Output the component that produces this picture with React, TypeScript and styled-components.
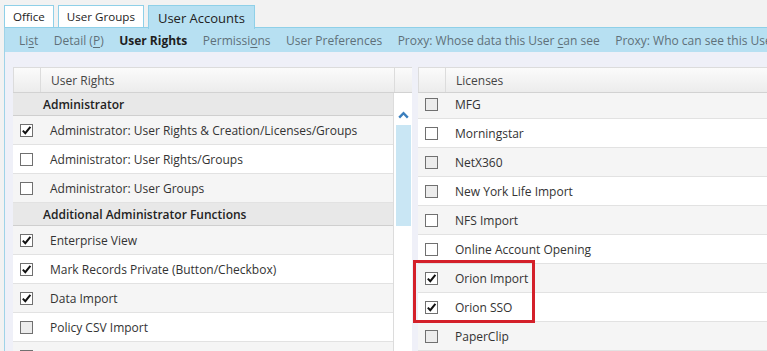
import React from 'react';
import styled, { createGlobalStyle } from 'styled-components';

const GlobalStyle = createGlobalStyle`
  html, body {
    margin: 0;
    padding: 0;
    height: 351px;
    overflow: hidden;
    background: #f2f2f2;
    font-family: 'Open Sans', 'Noto Sans', sans-serif;
    color: #333;
  }
`;

const Page = styled.div`
  width: 767px;
  height: 351px;
  overflow: hidden;
  display: flex;
  flex-direction: column;
`;

const TabStrip = styled.div`
  display: flex;
  gap: 4px;
  padding: 5px 0 0 4px;
  height: 22px;
  flex-shrink: 0;
`;

const Tab = styled.div<{ active?: boolean }>`
  display: flex;
  align-items: center;
  padding: 0 ${p => (p.active ? '9px' : '8px')};
  height: ${p => (p.active ? '23px' : '21px')};
  border: 1px solid #8fd0e8;
  border-bottom: none;
  background: ${p => (p.active ? '#b7e0f2' : '#ffffff')};
  font-size: ${p => (p.active ? '13px' : '11.6px')};
  color: #222;
  white-space: nowrap;
  z-index: 1;
`;

const Panel = styled.div`
  flex: 1;
  margin-left: 4px;
  border-left: 1px solid #9fd3e8;
  border-top: 1px solid #8fd0e8;
  background: #eff0f8;
  display: flex;
  flex-direction: column;
  min-height: 0;
`;

const SubNav = styled.nav`
  display: flex;
  align-items: center;
  gap: 15.5px;
  height: 24px;
  flex-shrink: 0;
  padding-left: 14px;
  background: #b7e0f2;
  white-space: nowrap;
  overflow: hidden;
`;

const NavItem = styled.span<{ active?: boolean }>`
  font-size: 12px;
  color: ${p => (p.active ? '#1e1e1e' : '#5f7079')};
  font-weight: ${p => (p.active ? 700 : 400)};
  u {
    text-decoration: underline;
    text-underline-offset: 2px;
  }
`;

const Content = styled.div`
  display: flex;
  gap: 6px;
  padding: 15px 0 0 8px;
  min-height: 0;
  flex: 1;
  overflow: hidden;
`;

const Grid = styled.div<{ width?: number }>`
  display: flex;
  flex-direction: column;
  flex: ${p => (p.width ? `0 0 ${p.width}px` : '1')};
  position: relative;
  background: #fff;
  min-height: 0;
`;

const HeaderRow = styled.div`
  display: flex;
  height: 24px;
  flex-shrink: 0;
  border-top: 1px solid #dcdcdc;
  border-bottom: 1px solid #d2d2d2;
  background: linear-gradient(#fbfbfb, #ececec);
`;

const HeaderCell = styled.div<{ w?: number }>`
  display: flex;
  align-items: center;
  padding-left: ${p => (p.w ? '0' : '10px')};
  flex: ${p => (p.w ? `0 0 ${p.w}px` : '1')};
  border-left: 1px solid #dcdcdc;
  font-size: 12px;
  color: #444;
`;

const Body = styled.div`
  display: flex;
  flex: 1;
  min-height: 0;
  overflow: hidden;
`;

const Rows = styled.div<{ scrolled?: number }>`
  flex: 1;
  display: flex;
  flex-direction: column;
  margin-top: ${p => (p.scrolled ? `-${p.scrolled}px` : '0')};
`;

const GroupRow = styled.div`
  display: flex;
  align-items: center;
  height: 22px;
  flex-shrink: 0;
  padding-left: 30px;
  background: #e8e8e8;
  border-bottom: 1px solid #cfcfcf;
  font-size: 12px;
  font-weight: 600;
  color: #222;
`;

const Row = styled.div<{ shaded?: boolean }>`
  display: flex;
  align-items: center;
  height: 28px;
  flex: 0 0 28px;
  background: ${p => (p.shaded ? '#f5f5f5' : '#ffffff')};
  border-bottom: 1px solid #e2e2e2;
  font-size: 12px;
  color: #333;
`;

const CheckCell = styled.div`
  flex: 0 0 26px;
  display: flex;
  align-items: center;
  justify-content: center;
`;

const Box = styled.span<{ muted?: boolean }>`
  width: 11px;
  height: 11px;
  border: 1px solid #707070;
  background: ${p => (p.muted ? '#ececec' : '#ffffff')};
  display: flex;
  align-items: center;
  justify-content: center;
`;

const Label = styled.span`
  padding-left: 11px;
  white-space: nowrap;
`;

const ScrollTrack = styled.div`
  flex: 0 0 18px;
  border-left: 1px solid #dcdcdc;
  display: flex;
  flex-direction: column;
  align-items: center;
  padding-top: 18px;
  background: #fff;
`;

const Thumb = styled.div`
  width: 15px;
  height: 101px;
  margin-top: 6px;
  background: #c9e6f4;
`;

const Highlight = styled.div`
  position: absolute;
  left: -5px;
  top: 193px;
  width: 116px;
  height: 57px;
  border: 3px solid #d4202a;
  pointer-events: none;
`;

const Check = ({ checked, muted }: { checked?: boolean; muted?: boolean }) => (
  <CheckCell>
    <Box muted={muted}>
      {checked && (
        <svg width="11" height="11" viewBox="0 0 11 11">
          <path d="M1.8 5.6 L4.3 8.2 L9.4 1.9" fill="none" stroke="#111" strokeWidth="2" />
        </svg>
      )}
    </Box>
  </CheckCell>
);

type Item = { label: string; checked?: boolean; muted?: boolean };
type Section = { group?: string; items: Item[] };

const rights: Section[] = [
  {
    group: 'Administrator',
    items: [
      { label: 'Administrator: User Rights & Creation/Licenses/Groups', checked: true },
      { label: 'Administrator: User Rights/Groups' },
      { label: 'Administrator: User Groups' },
    ],
  },
  {
    group: 'Additional Administrator Functions',
    items: [
      { label: 'Enterprise View', checked: true },
      { label: 'Mark Records Private (Button/Checkbox)', checked: true },
      { label: 'Data Import', checked: true },
      { label: 'Policy CSV Import', muted: true },
      { label: 'Change Ownership', checked: true },
    ],
  },
];

const licenses: Item[] = [
  { label: 'MFG', muted: true },
  { label: 'Morningstar' },
  { label: 'NetX360', muted: true },
  { label: 'New York Life Import', muted: true },
  { label: 'NFS Import' },
  { label: 'Online Account Opening' },
  { label: 'Orion Import', checked: true },
  { label: 'Orion SSO', checked: true },
  { label: 'PaperClip', muted: true },
];

const navItems = [
  { text: <>Li<u>s</u>t</> },
  { text: <>Detail (<u>P</u>)</> },
  { text: <>User Rights</>, active: true },
  { text: <>Permissi<u>o</u>ns</> },
  { text: <>User Preferences</> },
  { text: <>Proxy: Whose data this User <u>c</u>an see</> },
  { text: <>Proxy: Who can see this User's data</> },
];

const App = () => (
  <>
    <GlobalStyle />
    <Page>
      <TabStrip>
        <Tab>Office</Tab>
        <Tab>User Groups</Tab>
        <Tab active>User Accounts</Tab>
      </TabStrip>
      <Panel>
        <SubNav>
          {navItems.map((n, i) => (
            <NavItem key={i} active={n.active}>
              {n.text}
            </NavItem>
          ))}
        </SubNav>
        <Content>
          <Grid width={399}>
            <HeaderRow>
              <HeaderCell w={26} />
              <HeaderCell>User Rights</HeaderCell>
              <HeaderCell w={17} />
            </HeaderRow>
            <Body>
              <Rows>
                {rights.map(sec => (
                  <React.Fragment key={sec.group}>
                    <GroupRow>{sec.group}</GroupRow>
                    {sec.items.map((it, i) => (
                      <Row key={it.label} shaded={i % 2 === 0}>
                        <Check checked={it.checked} muted={it.muted} />
                        <Label>{it.label}</Label>
                      </Row>
                    ))}
                  </React.Fragment>
                ))}
              </Rows>
              <ScrollTrack>
                <svg width="11" height="8" viewBox="0 0 11 8">
                  <path d="M1.2 6.6 L5.5 2.2 L9.8 6.6" fill="none" stroke="#3b7fbd" strokeWidth="2.4" />
                </svg>
                <Thumb />
              </ScrollTrack>
            </Body>
          </Grid>
          <Grid>
            <HeaderRow>
              <HeaderCell w={26} />
              <HeaderCell>Licenses</HeaderCell>
            </HeaderRow>
            <Body>
              <Rows scrolled={3}>
                {licenses.map((it, i) => (
                  <Row key={it.label} shaded={i % 2 === 0}>
                    <Check checked={it.checked} muted={it.muted} />
                    <Label>{it.label}</Label>
                  </Row>
                ))}
              </Rows>
            </Body>
            <Highlight />
          </Grid>
        </Content>
      </Panel>
    </Page>
  </>
);

export default App;
